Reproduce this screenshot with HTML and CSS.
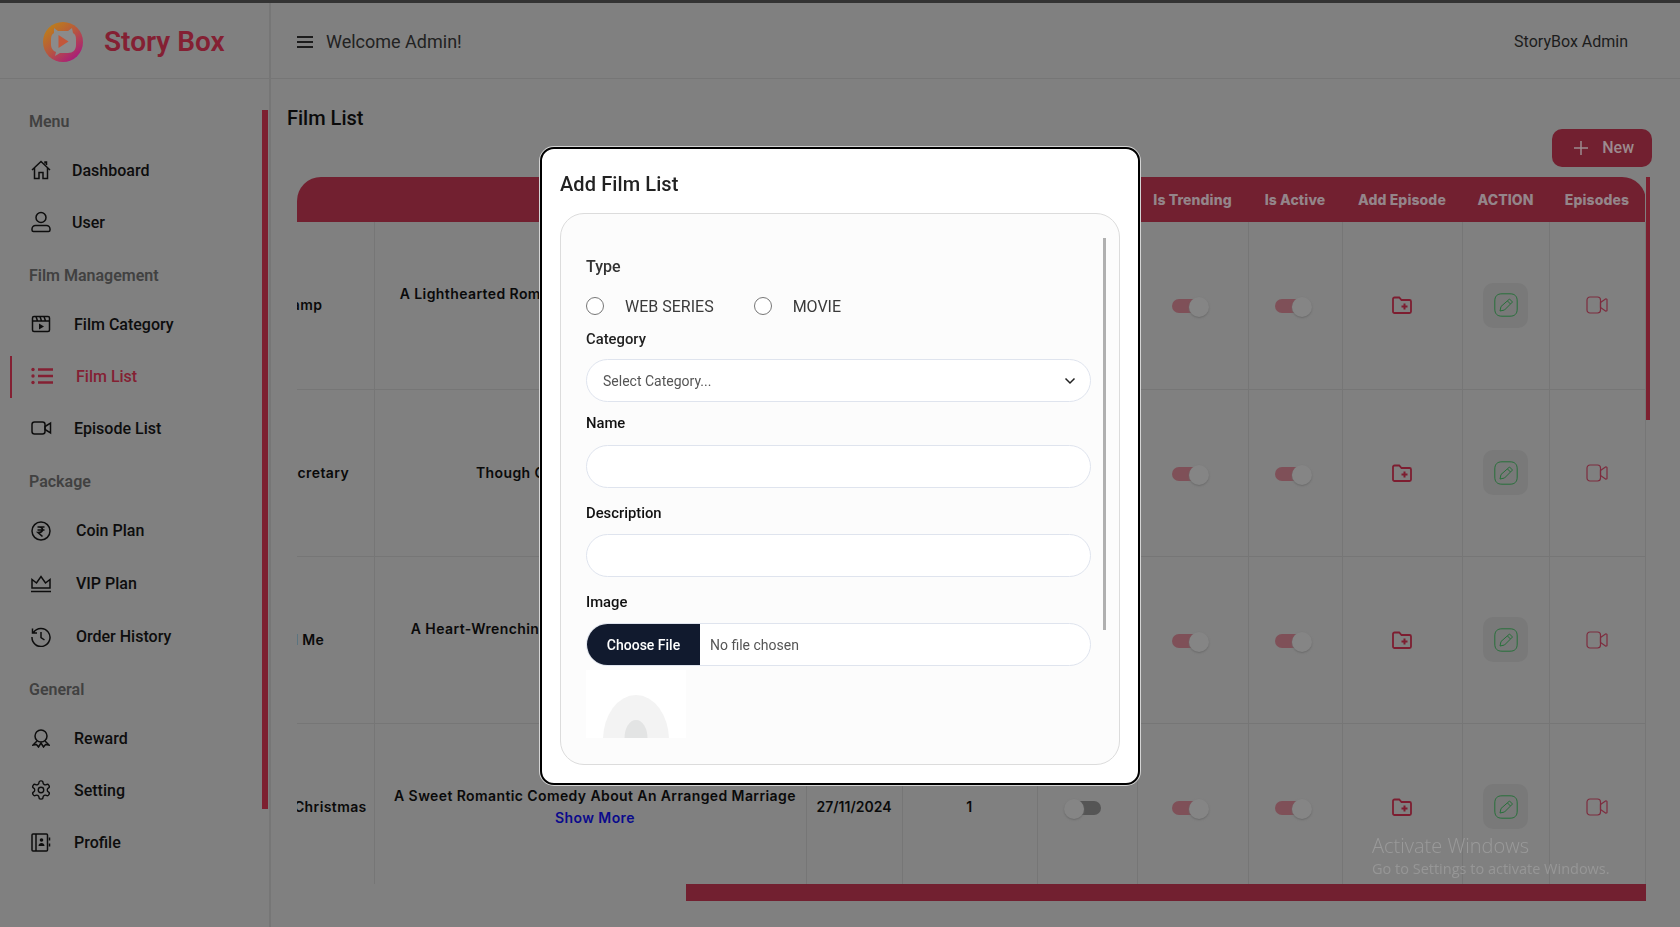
FILE: index.html
```html
<!DOCTYPE html>
<html lang="en">
<head>
    <meta charset="UTF-8">
    <meta name="viewport" content="width=device-width, initial-scale=1.0">
    <title>Story Box - Film List</title>
    <link rel="stylesheet" href="styles.css">
</head>
<body>

<svg class="sprites" width="0" height="0" aria-hidden="true">
    <symbol id="i-folder" viewBox="0 0 20 18">
        <path d="M1 3a1.5 1.5 0 0 1 1.5-1.500h4.700l2.300 2.500h8a1.500 1.500 0 0 1 1.500 1.500v10a1.500 1.500 0 0 1-1.500 1.500h-15A1.500 1.500 0 0 1 1 15.500z" fill="none" stroke="currentColor" stroke-width="1.800"/>
        <path d="M12.500 7.500v6M9.500 10.500h6" fill="none" stroke="currentColor" stroke-width="2"/>
    </symbol>
    <symbol id="i-edit" viewBox="0 0 24 24">
        <path d="M8 .8h8c4.800 0 7.200 2.400 7.200 7.200v8c0 4.800-2.400 7.200-7.200 7.200H8C3.200 23.200.8 20.800.8 16V8C.8 3.200 3.200.8 8 .8z" fill="none" stroke="currentColor"/>
        <path d="M15.500 6l3 3-8 8-4.500 1 1-4.500zM13.500 8l3 3" fill="none" stroke="currentColor"/>
    </symbol>
    <symbol id="i-video" viewBox="0 0 22 18">
        <rect x="1" y="1" width="13.500" height="16" rx="3" fill="none" stroke="currentColor" stroke-width="1.200"/>
        <path d="M14.500 6.500l5-3.500c.5-.3 1.500 0 1.500.5v11c0 .5-1 .8-1.500.5l-5-3.500z" fill="none" stroke="currentColor" stroke-width="1.200"/>
    </symbol>
</svg>

<div class="top-strip"></div>

<div class="app">
    <aside class="sidebar">
        <div class="brand">
            <svg class="brand-logo" width="40" height="40" viewBox="0 0 40 40">
                <defs>
                    <linearGradient id="logoGrad" x1="0.1" y1="0.1" x2="0.8" y2="0.95">
                        <stop offset="0" stop-color="#bd8018"/>
                        <stop offset="0.5" stop-color="#b65640"/>
                        <stop offset="1" stop-color="#a81a7c"/>
                    </linearGradient>
                </defs>
                <circle cx="20" cy="20" r="20" fill="url(#logoGrad)"/>
                <path d="M11 6l4 3h10l4-3 1 5c2 1 3 3 3 6v6c0 5-3 8-8 8h-8l-5 3 1-4c-3-1-5-4-5-7v-6c0-3 1-5 3-6z" fill="#8b8b8b"/>
                <path d="M15.500 13.500l10 6.500-10 6.500z" fill="#c2573a" transform="translate(0 -.5)"/>
            </svg>
            <span class="brand-name">Story Box</span>
        </div>
        <nav class="nav">
            <div class="nav-scroll"></div>

            <h4 class="nav-title">Menu</h4>
            <a class="nav-item gap-a">
                <span class="nav-icon"><svg width="20" height="20" viewBox="0 0 20 20"><path d="M1 10l9-8.500 9 8.500M3.500 8v10.500h4.500v-6h4v6h4.500V8M14 3.500V2h1.500v3" /></svg></span>
                Dashboard
            </a>
            <a class="nav-item gap-a">
                <span class="nav-icon"><svg width="20" height="22" viewBox="0 0 20 22"><circle cx="10" cy="6.500" r="5"/><path d="M4.500 14.500h11a3.500 3.500 0 0 1 3.500 3.500v1a1.500 1.500 0 0 1-1.500 1.500h-15A1.500 1.500 0 0 1 1 19v-1a3.500 3.500 0 0 1 3.500-3.500z"/></svg></span>
                User
            </a>

            <h4 class="nav-title">Film Management</h4>
            <a class="nav-item gap-b">
                <span class="nav-icon"><svg width="20" height="18" viewBox="0 0 20 18"><rect x="1.500" y="1.500" width="17" height="15" rx="1.500"/><path d="M1.500 6h17M5 1.500L6.500 6M9 1.500L10.500 6M13 1.500L14.500 6"/><path d="M8 8.500l5 3-5 3z" class="solid"/></svg></span>
                Film Category
            </a>
            <a class="nav-item gap-c is-active">
                <span class="nav-icon"><svg width="22" height="18" viewBox="0 0 22 18"><path d="M7 2.500h15M7 9h15M7 15.500h15" stroke-width="2.400"/><circle cx="2" cy="2.500" r="1.700" class="solid"/><circle cx="2" cy="9" r="1.700" class="solid"/><circle cx="2" cy="15.500" r="1.700" class="solid"/></svg></span>
                Film List
            </a>
            <a class="nav-item gap-b">
                <span class="nav-icon"><svg width="21" height="14" viewBox="0 0 21 14"><rect x="1" y="1" width="13" height="12" rx="2.500"/><path d="M14 5.500l5.500-3.500v10L14 8.500z"/></svg></span>
                Episode List
            </a>

            <h4 class="nav-title">Package</h4>
            <a class="nav-item nav-wide gap-c">
                <span class="nav-icon"><svg width="20" height="20" viewBox="0 0 20 20"><circle cx="10" cy="10" r="9"/><path d="M6.500 6h7M6.500 9h7M8 6c3.500 0 4 3 3.500 3.500C11 11 9 11.500 7 11.500l4.500 4" stroke-width="1.600"/></svg></span>
                Coin Plan
            </a>
            <a class="nav-item nav-wide gap-c">
                <span class="nav-icon"><svg width="20" height="18" viewBox="0 0 20 18"><path d="M1 13V4.500l4.500 3.500L10 1.500 14.500 8 19 4.500V13zM0 16.500h20"/></svg></span>
                VIP Plan
            </a>
            <a class="nav-item nav-wide gap-c">
                <span class="nav-icon"><svg width="20" height="20" viewBox="0 0 20 20"><path d="M2.500 5.500A9 9 0 1 1 1 10M1.500 1.500v4.500H6M10 5v5.500l3.500 2.500"/></svg></span>
                Order History
            </a>

            <h4 class="nav-title">General</h4>
            <a class="nav-item gap-b">
                <span class="nav-icon"><svg width="18" height="19" viewBox="0 0 18 19"><circle cx="9" cy="7" r="6"/><path d="M5 12l-4 4 3.500-.500L6.500 18l2.500-4 2.500 4 2-2.500L17 16l-4-4"/></svg></span>
                Reward
            </a>
            <a class="nav-item gap-b">
                <span class="nav-icon"><svg width="22" height="22" viewBox="0 0 24 24"><path d="M12.220 2h-.44a2 2 0 0 0-2 2v.18a2 2 0 0 1-1 1.730l-.43.25a2 2 0 0 1-2 0l-.15-.08a2 2 0 0 0-2.730.73l-.22.38a2 2 0 0 0 .73 2.730l.15.1a2 2 0 0 1 1 1.720v.51a2 2 0 0 1-1 1.740l-.15.09a2 2 0 0 0-.73 2.730l.22.38a2 2 0 0 0 2.730.73l.15-.08a2 2 0 0 1 2 0l.43.25a2 2 0 0 1 1 1.730V20a2 2 0 0 0 2 2h.44a2 2 0 0 0 2-2v-.18a2 2 0 0 1 1-1.730l.43-.25a2 2 0 0 1 2 0l.15.08a2 2 0 0 0 2.730-.73l.22-.39a2 2 0 0 0-.73-2.730l-.15-.08a2 2 0 0 1-1-1.740v-.5a2 2 0 0 1 1-1.740l.15-.09a2 2 0 0 0 .73-2.730l-.22-.38a2 2 0 0 0-2.730-.73l-.15.08a2 2 0 0 1-2 0l-.43-.25a2 2 0 0 1-1-1.730V4a2 2 0 0 0-2-2z"/><circle cx="12" cy="12" r="3"/></svg></span>
                Setting
            </a>
            <a class="nav-item gap-b">
                <span class="nav-icon"><svg width="20" height="19" viewBox="0 0 20 19"><rect x="1" y="1" width="15.500" height="17" rx="1"/><path d="M5 1v17M18.500 4.500v3M18.500 10.500v3"/><circle cx="10.500" cy="7" r="1.800" class="solid"/><path d="M7.500 13c0-2 1.500-3 3-3s3 1 3 3z" class="solid"/></svg></span>
                Profile
            </a>
        </nav>
    </aside>

    <div class="main-col">
        <header class="topbar">
            <div class="topbar-left">
                <svg width="16" height="12" viewBox="0 0 16 12"><path d="M0 1h16M0 6h16M0 11h16" stroke="#1c1c1c" stroke-width="2"/></svg>
                <span class="welcome">Welcome Admin!</span>
            </div>
            <span class="admin-name">StoryBox Admin</span>
        </header>

        <main class="content">
            <div class="toolbar">
                <h1 class="page-title">Film List</h1>
                <button class="btn-new" type="button">
                    <svg width="14" height="14" viewBox="0 0 14 14"><path d="M7 0v14M0 7h14" stroke="#9c8a8e" stroke-width="1.500"/></svg>
                    New
                </button>
            </div>

            <div class="table-frame">
                <div class="table-wrap">
                    <table class="film-table">
                        <colgroup>
                            <col class="c-name"><col class="c-desc"><col class="c-date"><col class="c-num">
                            <col class="c-new"><col class="c-trend"><col class="c-active"><col class="c-add">
                            <col class="c-action"><col class="c-eps">
                        </colgroup>
                        <thead>
                            <tr>
                                <th>Name</th><th>Description</th><th>Date</th><th>Episode</th><th>Is New</th>
                                <th>Is Trending</th><th>Is Active</th><th>Add Episode</th><th>ACTION</th><th>Episodes</th>
                            </tr>
                        </thead>
                        <tbody>
                            <tr>
                                <td class="nowrap">My Fake Life Champ</td>
                                <td class="desc">A Lighthearted Romantic Comedy About A Fake Lovers<br><a class="show-more">Show More</a></td>
                                <td class="date">27/11/2024</td>
                                <td>1</td>
                                <td><span class="toggle"></span></td>
                                <td><span class="toggle on"></span></td>
                                <td><span class="toggle on"></span></td>
                                <td><svg class="ic-folder" width="20" height="18"><use href="#i-folder"/></svg></td>
                                <td><span class="action-box"><svg width="24" height="24"><use href="#i-edit"/></svg></span></td>
                                <td><svg class="ic-video" width="22" height="18"><use href="#i-video"/></svg></td>
                            </tr>
                            <tr>
                                <td class="nowrap">The CEO And Her Secretary</td>
                                <td class="desc">Though CEO Falls For Her At First</td>
                                <td class="date">27/11/2024</td>
                                <td>1</td>
                                <td><span class="toggle"></span></td>
                                <td><span class="toggle on"></span></td>
                                <td><span class="toggle on"></span></td>
                                <td><svg class="ic-folder" width="20" height="18"><use href="#i-folder"/></svg></td>
                                <td><span class="action-box"><svg width="24" height="24"><use href="#i-edit"/></svg></span></td>
                                <td><svg class="ic-video" width="22" height="18"><use href="#i-video"/></svg></td>
                            </tr>
                            <tr>
                                <td class="nowrap">A Never Ever Tell Me</td>
                                <td class="desc">A Heart-Wrenching Story Of Love, Loss And Sorrow<br><a class="show-more">Show More</a></td>
                                <td class="date">27/11/2024</td>
                                <td>1</td>
                                <td><span class="toggle"></span></td>
                                <td><span class="toggle on"></span></td>
                                <td><span class="toggle on"></span></td>
                                <td><svg class="ic-folder" width="20" height="18"><use href="#i-folder"/></svg></td>
                                <td><span class="action-box"><svg width="24" height="24"><use href="#i-edit"/></svg></span></td>
                                <td><svg class="ic-video" width="22" height="18"><use href="#i-video"/></svg></td>
                            </tr>
                            <tr>
                                <td class="nowrap">Married Just Before A Christmas</td>
                                <td class="desc">A Sweet Romantic Comedy About An Arranged Marriage<br><a class="show-more">Show More</a></td>
                                <td class="date">27/11/2024</td>
                                <td>1</td>
                                <td><span class="toggle"></span></td>
                                <td><span class="toggle on"></span></td>
                                <td><span class="toggle on"></span></td>
                                <td><svg class="ic-folder" width="20" height="18"><use href="#i-folder"/></svg></td>
                                <td><span class="action-box"><svg width="24" height="24"><use href="#i-edit"/></svg></span></td>
                                <td><svg class="ic-video" width="22" height="18"><use href="#i-video"/></svg></td>
                            </tr>
                        </tbody>
                    </table>
                </div>
                <div class="v-thumb"></div>
            </div>
            <div class="h-thumb"></div>
        </main>
    </div>
</div>

<!-- modal -->
<div class="modal">
    <h2 class="modal-title">Add Film List</h2>
    <div class="modal-card">
        <div class="modal-thumb"></div>
        <form class="film-form">
            <div class="lbl lbl-type">Type</div>
            <div class="radio-row">
                <label class="radio"><input type="radio" name="type"> WEB SERIES</label>
                <label class="radio"><input type="radio" name="type"> MOVIE</label>
            </div>
            <div class="lbl lbl-cat">Category</div>
            <div class="select-box">
                <select class="field field-select">
                    <option>Select Category...</option>
                </select>
                <svg class="chevron" width="12" height="8" viewBox="0 0 12 8"><path d="M1.500 1.500L6 6l4.500-4.500" fill="none" stroke="#222" stroke-width="1.500"/></svg>
            </div>
            <div class="lbl">Name</div>
            <input class="field" type="text">
            <div class="lbl lbl-far">Description</div>
            <input class="field" type="text">
            <div class="lbl lbl-far">Image</div>
            <div class="file-field">
                <button class="file-btn" type="button">Choose File</button>
                <span class="file-name">No file chosen</span>
            </div>
            <svg class="preview" width="100" height="68" viewBox="0 0 100 68">
                <ellipse cx="50" cy="70" rx="33" ry="45" fill="#f3f3f3"/>
                <ellipse cx="50" cy="68" rx="11.500" ry="18" fill="#e3e4e4"/>
            </svg>
        </form>
    </div>
</div>

<div class="watermark">
    <div class="wm-big">Activate Windows</div>
    <div class="wm-small">Go to Settings to activate Windows.</div>
</div>

</body>
</html>
```

FILE: styles.css
```css
/* colours are the dimmed ones, as seen behind the modal */
* {
    box-sizing: border-box;
}
html, body {
    margin: 0;
    height: 100%;
    overflow: hidden;
}
body {
    background-color: #808080;
    font-family: Roboto, "Liberation Sans", sans-serif;
    color: #0d0d0d;
}
.sprites {
    position: absolute;
}
.top-strip {
    height: 3px;
    background-color: #333;
}
.app {
    display: flex;
    height: 924px;
}

/* sidebar */
.sidebar {
    width: 271px;
    flex-shrink: 0;
    border-right: 2px solid #767676;
}
.brand {
    display: flex;
    align-items: center;
    gap: 21px;
    height: 76px;
    padding-left: 43px;
    padding-top: 2px;
    border-bottom: 1px solid #767676;
}
.brand-name {
    font-size: 28px;
    font-weight: 600;
    color: #842033;
}
.nav {
    position: relative;
    padding-top: 33px;
}
.nav-scroll {
    position: absolute;
    top: 31px;
    right: 1px;
    width: 6px;
    height: 699px;
    background-color: #7d2030;
}
.nav-title {
    margin: 18px 0 12px 29px;
    font-size: 16px;
    line-height: 20px;
    font-weight: 600;
    color: #414141;
}
.nav-title:first-of-type {
    margin-top: 0;
}
.nav-title:last-of-type {
    margin-top: 17px;
}
.nav-item {
    position: relative;
    display: flex;
    align-items: center;
    height: 52px;
    padding-left: 29px;
    font-size: 16px;
    font-weight: 500;
    color: #0d0d0d;
}
.nav-wide {
    height: 53px;
}
.nav-wide:last-of-type {
    height: 52px;
}
.nav-icon {
    display: flex;
    justify-content: center;
    width: 24px;
}
.nav-icon svg {
    fill: none;
    stroke: currentColor;
    stroke-width: 1.500;
}
.nav-icon .solid {
    fill: currentColor;
    stroke: none;
}
.gap-a .nav-icon {
    margin-right: 19px;
}
.gap-b .nav-icon {
    margin-right: 21px;
}
.gap-c .nav-icon {
    margin-right: 23px;
}
.is-active {
    color: #842033;
}
.is-active svg {
    margin-left: 2px;
}
.is-active::before {
    content: "";
    position: absolute;
    left: 10px;
    top: 6px;
    bottom: 4px;
    width: 2px;
    background-color: #842033;
}

/* header */
.main-col {
    flex: 1;
    min-width: 0;
}
.topbar {
    display: flex;
    align-items: center;
    justify-content: space-between;
    height: 76px;
    padding: 2px 52px 0 26px;
    border-bottom: 1px solid #767676;
}
.topbar-left {
    display: flex;
    align-items: center;
    gap: 13px;
}
.welcome {
    font-size: 18px;
    color: #222;
}
.admin-name {
    font-size: 16px;
    color: #1c1c1c;
}

/* content */
.content {
    padding: 25px 28px 0 16px;
}
.toolbar {
    display: flex;
    justify-content: space-between;
    height: 63px;
    margin-bottom: 10px;
}
.page-title {
    margin: 0;
    font-size: 20px;
    line-height: 28px;
    font-weight: 500;
    color: #0a0a0a;
}
.btn-new {
    display: flex;
    align-items: center;
    gap: 14px;
    align-self: flex-end;
    height: 38px;
    padding: 0 18px 1px 22px;
    border: none;
    border-radius: 10px;
    background-color: #722030;
    font-family: Roboto, sans-serif;
    font-size: 16px;
    font-weight: 500;
    color: #9c8a8e;
}
.table-frame {
    display: flex;
    align-items: flex-start;
    margin-left: 10px;
}
.table-wrap {
    width: 1349px;
    height: 707px;
    overflow: hidden;
    border-radius: 24px 24px 0 0;
}
.v-thumb {
    width: 4px;
    height: 243px;
    background-color: #7d2030;
}
.h-thumb {
    width: 960px;
    height: 17px;
    margin-left: 399px;
    background-color: #722030;
}
.film-table {
    width: 1518px;
    margin-left: -170px;
    border-collapse: collapse;
    table-layout: fixed;
    font-family: Inter, "Liberation Sans", sans-serif;
    font-size: 14px;
    font-weight: 600;
    color: #0a0a0a;
}
.c-name { width: 247px; }
.c-desc { width: 432px; }
.c-date { width: 96px; }
.c-num { width: 135px; }
.c-new { width: 100px; }
.c-trend { width: 111px; }
.c-active { width: 94px; }
.c-add { width: 120px; }
.c-action { width: 87px; }
.c-eps { width: 96px; }
.film-table th {
    height: 45px;
    padding: 0;
    background-color: #722030;
    font-size: 14px;
    font-weight: 800;
    letter-spacing: 0.1px;
    color: #94858a;
    text-align: center;
}
.film-table td {
    height: 167px;
    padding: 0;
    border-right: 1px solid #767676;
    border-bottom: 1px solid #767676;
    text-align: center;
    line-height: 22px;
    letter-spacing: 0.4px;
}
.film-table td.desc {
    padding-left: 10px;
}
.film-table td.date {
    letter-spacing: 0;
}
.film-table tr:last-child td {
    border-bottom: none;
}
.film-table td svg {
    display: block;
    margin: 0 auto;
}
.nowrap {
    white-space: nowrap;
}
.show-more {
    color: #0a0a8c;
}
.toggle {
    position: relative;
    display: inline-block;
    width: 33px;
    height: 14px;
    margin-right: 5px;
    border-radius: 7px;
    background-color: #555;
    vertical-align: middle;
}
.toggle::after {
    content: "";
    position: absolute;
    left: -4px;
    top: -2px;
    width: 20px;
    height: 20px;
    border-radius: 50%;
    background-color: #858585;
    box-shadow: 0 1px 2px #6a6a6a;
}
.toggle.on {
    margin-right: 8px;
    background-color: #7f5058;
}
.toggle.on::after {
    left: 17px;
}
.ic-folder {
    color: #7d1d30;
}
.ic-video {
    color: #7d2c3e;
}
.action-box {
    display: inline-flex;
    align-items: center;
    justify-content: center;
    width: 45px;
    height: 45px;
    border-radius: 10px;
    background-color: #797979;
    color: #27703a;
    vertical-align: middle;
}

/* modal */
.modal {
    position: fixed;
    top: 147px;
    left: 540px;
    display: flex;
    flex-direction: column;
    width: 600px;
    height: 638px;
    padding: 18px;
    border: 2px solid #000;
    border-radius: 14px;
    background-color: #fff;
    box-shadow: 0 0 0 1px #d4d4d4;
}
.modal-title {
    margin: 0 0 12px;
    font-size: 20px;
    line-height: 34px;
    font-weight: 500;
    letter-spacing: 0.1px;
    color: #222;
}
.modal-card {
    position: relative;
    flex: 1;
    padding: 25px;
    border: 1px solid #dcdcdc;
    border-radius: 24px;
    background-color: #fcfcfc;
}
.modal-thumb {
    position: absolute;
    top: 24px;
    right: 13px;
    width: 3px;
    height: 392px;
    background-color: #b0b0b0;
}
.film-form {
    width: 505px;
    height: 500px;
    overflow: hidden;
}
.lbl {
    margin: 11px 0 12px;
    font-size: 14.800px;
    line-height: 20px;
    font-weight: 500;
    color: #111;
}
.lbl-type {
    margin: 18px 0 17px;
    font-size: 16px;
    color: #333;
}
.lbl-cat {
    margin: 11px 0 10px;
    color: #222;
}
.lbl-far {
    margin-top: 15px;
    margin-bottom: 11px;
}
.radio-row {
    display: flex;
    gap: 40px;
    height: 24px;
}
.radio {
    display: flex;
    align-items: center;
    gap: 21px;
    font-size: 16px;
    color: #3a3a3a;
}
.radio input {
    width: 18px;
    height: 18px;
    margin: 0;
}
.field {
    display: block;
    width: 100%;
    height: 43px;
    padding: 0 16px;
    border: 1px solid #dfe4ee;
    border-radius: 22px;
    background-color: #fff;
    font-family: Roboto, sans-serif;
    font-size: 14px;
    color: #555;
    outline: none;
}
.field-select {
    appearance: none;
}
.select-box {
    position: relative;
}
.chevron {
    position: absolute;
    right: 15px;
    top: 18px;
}
.file-field {
    display: flex;
    align-items: center;
    height: 43px;
    margin: 1px 0 4px;
    overflow: hidden;
    border: 1px solid #dfe4ee;
    border-radius: 22px;
    background-color: #fff;
}
.file-btn {
    width: 113px;
    height: 100%;
    border: none;
    background-color: #111a2e;
    font-family: Roboto, sans-serif;
    font-size: 14px;
    font-weight: 500;
    color: #fff;
}
.file-name {
    margin-left: 10px;
    font-size: 14px;
    color: #555;
}
.preview {
    display: block;
    background-color: #fff;
}

/* windows watermark */
.watermark {
    position: fixed;
    left: 1372px;
    top: 832px;
    font-family: "Open Sans", sans-serif;
    font-weight: 300;
    color: #9a9a9a;
    pointer-events: none;
}
.wm-big {
    font-size: 20px;
    line-height: 28px;
}
.wm-small {
    font-size: 14.500px;
    line-height: 18px;
    color: #969696;
    font-weight: 400;
}
```
